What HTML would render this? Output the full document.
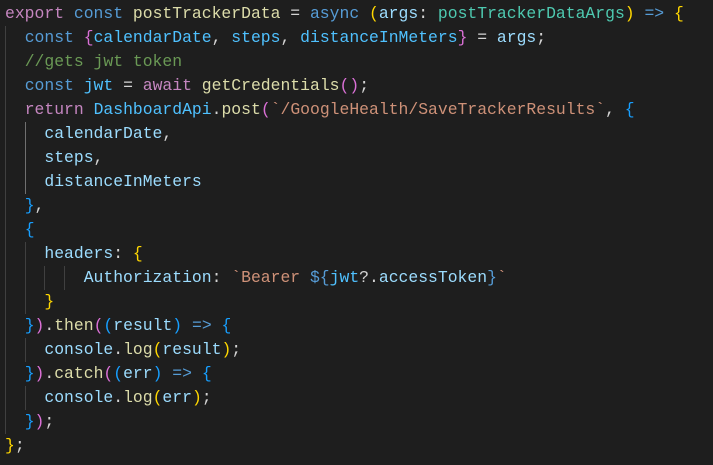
<!DOCTYPE html>
<html><head><meta charset="utf-8"><style>
html,body{margin:0;padding:0;background:#1e1e1e;width:713px;height:465px;overflow:hidden}
.c{position:absolute;left:5px;top:2px;font-family:"Liberation Mono",monospace;font-size:16.4px;line-height:24px;color:#d4d4d4;white-space:pre}
.k{color:#569cd6}.p{color:#c586c0}.f{color:#dcdcaa}.v{color:#9cdcfe}.n{color:#4fc1ff}.t{color:#4ec9b0}.cm{color:#6a9955}.s{color:#ce9178}
.g{color:#ffd700}.m{color:#da70d6}.b{color:#179fff}
.ig{position:absolute;width:1px;background:#404040}
</style></head><body>
<div class="ig" style="left:5px;top:26px;height:408px"></div>
<div class="ig" style="left:25px;top:122px;height:72px;background:#707070"></div>
<div class="ig" style="left:25px;top:242px;height:72px"></div>
<div class="ig" style="left:44px;top:266px;height:24px"></div>
<div class="ig" style="left:64px;top:266px;height:24px"></div>
<div class="ig" style="left:25px;top:338px;height:24px"></div>
<div class="ig" style="left:25px;top:386px;height:24px"></div>
<div class="c"><span class="p">export</span> <span class="k">const</span> <span class="f">postTrackerData</span> = <span class="k">async</span> <span class="g">(</span><span class="v">args</span>: <span class="t">postTrackerDataArgs</span><span class="g">)</span> <span class="k">=&gt;</span> <span class="g">{</span>
  <span class="k">const</span> <span class="m">{</span><span class="n">calendarDate</span>, <span class="n">steps</span>, <span class="n">distanceInMeters</span><span class="m">}</span> = <span class="v">args</span>;
  <span class="cm">//gets jwt token</span>
  <span class="k">const</span> <span class="n">jwt</span> = <span class="p">await</span> <span class="f">getCredentials</span><span class="m">()</span>;
  <span class="p">return</span> <span class="n">DashboardApi</span>.<span class="f">post</span><span class="m">(</span><span class="s">`/GoogleHealth/SaveTrackerResults`</span>, <span class="b">{</span>
    <span class="v">calendarDate</span>,
    <span class="v">steps</span>,
    <span class="v">distanceInMeters</span>
  <span class="b">}</span>,
  <span class="b">{</span>
    <span class="v">headers</span>: <span class="g">{</span>
        <span class="v">Authorization</span>: <span class="s">`Bearer </span><span class="k">${</span><span class="n">jwt</span>?.<span class="v">accessToken</span><span class="k">}</span><span class="s">`</span>
    <span class="g">}</span>
  <span class="b">}</span><span class="m">)</span>.<span class="f">then</span><span class="m">(</span><span class="b">(</span><span class="v">result</span><span class="b">)</span> <span class="k">=&gt;</span> <span class="b">{</span>
    <span class="v">console</span>.<span class="f">log</span><span class="g">(</span><span class="v">result</span><span class="g">)</span>;
  <span class="b">}</span><span class="m">)</span>.<span class="f">catch</span><span class="m">(</span><span class="b">(</span><span class="v">err</span><span class="b">)</span> <span class="k">=&gt;</span> <span class="b">{</span>
    <span class="v">console</span>.<span class="f">log</span><span class="g">(</span><span class="v">err</span><span class="g">)</span>;
  <span class="b">}</span><span class="m">)</span>;
<span class="g">}</span>;</div>
</body></html>
